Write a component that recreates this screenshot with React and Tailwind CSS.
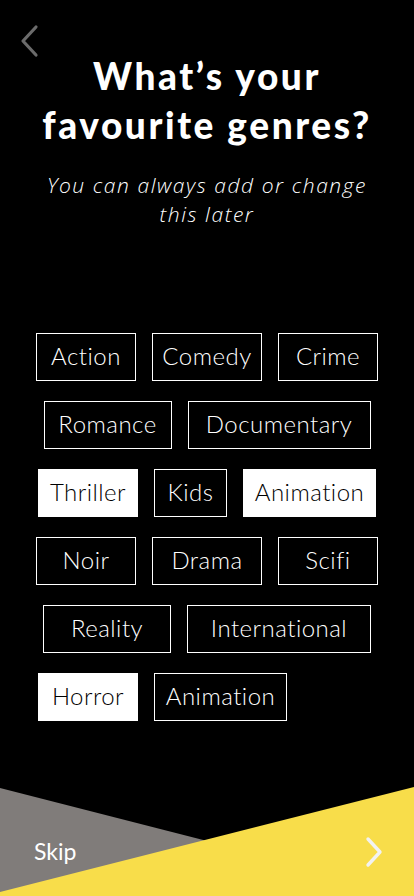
import { useState } from "react";

const ROWS = [
  { items: [["Action", 100], ["Comedy", 110], ["Crime", 100]] },
  { items: [["Romance", 128], ["Documentary", 183]] },
  { items: [["Thriller", 100], ["Kids", 73], ["Animation", 133]] },
  { items: [["Noir", 100], ["Drama", 110], ["Scifi", 100]] },
  { items: [["Reality", 128], ["International", 184]] },
  { items: [["Horror", 100], ["Animation", 133]], left: true },
];

const Chip = ({ label, width, active, onClick }) => (
  <button
    onClick={onClick}
    style={{ width }}
    className={`h-12 shrink-0 border border-white text-[24px] font-light tracking-[0.02em] flex items-center justify-center pb-[2px] ${
      active ? "bg-white text-black" : "bg-black text-white"
    }`}
  >
    {label}
  </button>
);

const Genres = () => {
  const [selected, setSelected] = useState(["2-0", "2-2", "5-0"]);

  const toggle = (key) => {
    setSelected(
      selected.includes(key) ? selected.filter((k) => k !== key) : [...selected, key]
    );
  };

  return (
    <div className="flex flex-col gap-5 mt-[104px]">
      {ROWS.map((row, r) => (
        <div
          key={r}
          className={`flex gap-4 ${
            row.left ? "w-[338px] mx-auto justify-start" : "justify-center"
          }`}
        >
          {row.items.map(([label, width], i) => (
            <Chip
              key={label + i}
              label={label}
              width={width}
              active={selected.includes(`${r}-${i}`)}
              onClick={() => toggle(`${r}-${i}`)}
            />
          ))}
        </div>
      ))}
    </div>
  );
};

export default function App() {
  return (
    <main
      className="w-[414px] h-[896px] bg-black text-white flex flex-col overflow-hidden"
      style={{ fontFamily: "Lato, 'Open Sans', sans-serif" }}
    >
      {/* Back */}
      <div className="h-0 relative">
        <button className="absolute left-[16px] top-[20px] p-1" aria-label="Back">
          <svg width="20" height="34" viewBox="0 0 20 34" fill="none">
            <path
              d="M16 3 L3 17 L16 31"
              stroke="#6b6b6b"
              strokeWidth="3.2"
              strokeLinecap="round"
              strokeLinejoin="round"
            />
          </svg>
        </button>
      </div>

      {/* Heading */}
      <h1 className="mt-[51px] text-center text-[37px] leading-[49px] font-black tracking-[0.07em]">
        <span className="block">What’s your</span>
        <span className="block">favourite genres?</span>
      </h1>
      <p
        className="mt-[22px] text-center text-[21px] leading-[29px] italic font-light tracking-[0.075em]"
        style={{ fontFamily: "'Open Sans', Lato, sans-serif" }}
      >
        You can always add or change
        <br />
        this later
      </p>

      <Genres />

      <div className="flex-1" />

      {/* Footer */}
      <footer className="relative h-[110px] shrink-0">
        <svg
          className="absolute inset-0"
          width="414"
          height="110"
          viewBox="0 0 414 110"
        >
          <polygon points="0,2 414,108 0,110" fill="#807c7a" />
          <polygon points="0,106 414,1 414,110 0,110" fill="#f8dd4a" />
        </svg>
        <div className="relative h-full flex items-end justify-between pb-[26px] pl-[34px] pr-[30px]">
          <button className="text-[23px] leading-none text-white mb-[7px]">Skip</button>
          <button aria-label="Next" className="mb-[2px]">
            <svg width="20" height="32" viewBox="0 0 20 32" fill="none">
              <path
                d="M4 3 L16 16 L4 29"
                stroke="#f2f2f2"
                strokeWidth="3.4"
                strokeLinecap="round"
                strokeLinejoin="round"
              />
            </svg>
          </button>
        </div>
      </footer>
    </main>
  );
}
